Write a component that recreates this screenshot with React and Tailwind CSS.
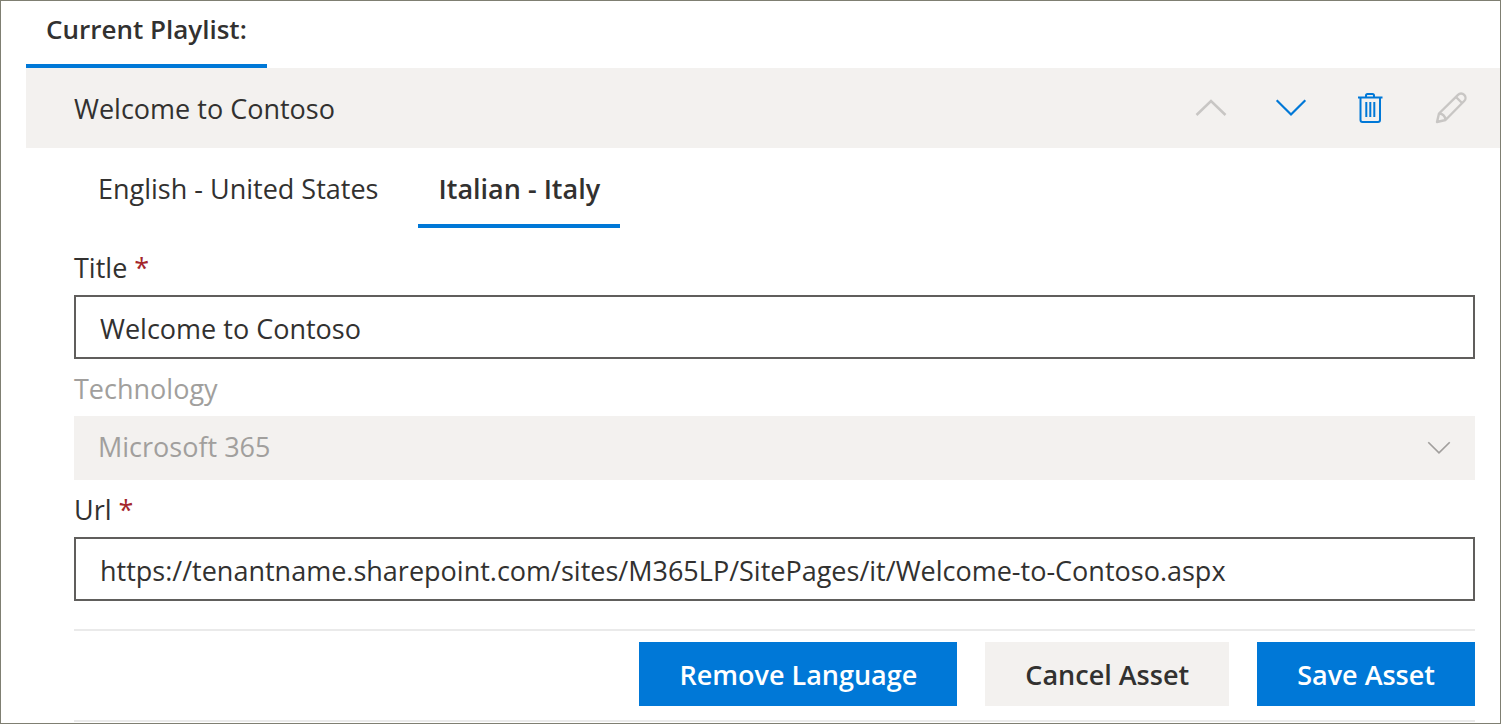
import { useState } from "react";

function ChevronUp({ className }) {
  return (
    <svg className={className} viewBox="0 0 32 32" fill="none" stroke="currentColor" strokeWidth="2.5" aria-hidden="true">
      <path d="M1.500 23 16 9l14.500 14" />
    </svg>
  );
}

function ChevronDown({ className }) {
  return (
    <svg className={className} viewBox="0 0 32 32" fill="none" stroke="currentColor" strokeWidth="2.2" aria-hidden="true">
      <path d="M1.700 8.300 16 22.500 30.300 8.300" />
    </svg>
  );
}

function Trash({ className }) {
  return (
    <svg className={className} viewBox="0 0 32 32" fill="none" stroke="currentColor" strokeWidth="2" aria-hidden="true">
      <path d="M3 5.500h24.500M11 5.500V3.500a1.500 1.500 0 0 1 1.500-1.500h5a1.500 1.500 0 0 1 1.500 1.500v2M5.500 5.500V28a2 2 0 0 0 2 2h15.500a2 2 0 0 0 2-2V5.500" />
      <path d="M11.300 10v15M15.300 10v15M19.300 10v15" />
    </svg>
  );
}

function Pencil({ className }) {
  return (
    <svg className={className} viewBox="0 0 32 32" fill="none" stroke="currentColor" strokeWidth="2.4" strokeLinejoin="round" aria-hidden="true">
      <path d="M2 30l2-8.500L23 2.800a4.200 4.200 0 0 1 6.200 6.200L10.500 28 2 30zM21 5l6 6M4.500 21.500c3 0.500 5.500 3 6 6" />
    </svg>
  );
}

const tabs = ["English - United States", "Italian - Italy"];
const labelClass = "block pt-3 pb-[9px] leading-9";
const inputClass = "block h-16 w-full border-2 border-[#605e5c] bg-white px-6 pt-0.5 outline-none";
const iconButton = "flex h-20 w-20 items-center justify-center";
const actionButton = "h-16 px-10 pt-0.5";

export default function App() {
  const [active, setActive] = useState(1);
  const [title, setTitle] = useState("Welcome to Contoso");
  const [url, setUrl] = useState("https://tenantname.sharepoint.com/sites/M365LP/SitePages/it/Welcome-to-Contoso.aspx");

  return (
    <main className="border border-[#7f7f72] bg-white pb-px pl-[25px] font-['Open_Sans','Noto_Sans',sans-serif] text-[27px] text-[#323130]">
      <div className="flex">
        <h1 className="border-b-4 border-[#0078d7] px-5 pt-2 pb-[15px] text-[26px] leading-10 font-semibold">Current Playlist:</h1>
      </div>

      <section className="flex h-20 items-center justify-between bg-[#f3f1ef] pl-12">
        <h2 className="pt-0.5">Welcome to Contoso</h2>
        <div className="flex pr-[9px]">
          <button type="button" disabled aria-label="Move up" className={`${iconButton} text-[#c8c6c4]`}>
            <ChevronUp className="size-8" />
          </button>
          <button type="button" aria-label="Move down" className={`${iconButton} text-[#0078d7]`}>
            <ChevronDown className="size-8" />
          </button>
          <button type="button" aria-label="Delete" className={`${iconButton} text-[#0078d7]`}>
            <Trash className="size-8" />
          </button>
          <button type="button" disabled aria-label="Edit" className={`${iconButton} text-[#c8c6c4]`}>
            <Pencil className="size-8" />
          </button>
        </div>
      </section>

      <div className="pr-[25px] pl-12">
        <div role="tablist" className="flex gap-5 pl-1">
          {tabs.map((name, i) => (
            <button
              key={name}
              type="button"
              role="tab"
              aria-selected={i === active}
              onClick={() => setActive(i)}
              className={`h-20 border-b-4 px-5 pt-1.5 ${i === active ? "border-[#0078d7] font-semibold" : "border-transparent"}`}
            >
              {name}
            </button>
          ))}
        </div>

        <form className="pt-[10px]" onSubmit={(e) => e.preventDefault()}>
          <label htmlFor="title" className={labelClass}>
            Title <span className="text-[#a4262c]">*</span>
          </label>
          <input id="title" className={inputClass} value={title} onChange={(e) => setTitle(e.target.value)} />

          <label htmlFor="technology" className={`${labelClass} text-[#a19f9d]`}>Technology</label>
          <div className="relative">
            <select id="technology" disabled className="block h-16 w-full appearance-none bg-[#f3f1ef] px-6 pb-0.5 text-[#a19f9d] opacity-100">
              <option>Microsoft 365</option>
            </select>
            <ChevronDown className="pointer-events-none absolute top-5 right-6 size-6 text-[#a19f9d]" />
          </div>

          <label htmlFor="url" className={labelClass}>
            Url <span className="text-[#a4262c]">*</span>
          </label>
          <input id="url" className={inputClass} value={url} onChange={(e) => setUrl(e.target.value)} />

          <div className="mt-7 flex justify-end gap-7 border-y-2 border-[#eaeaea] pt-[11px] pb-[14px] font-semibold">
            <button type="button" className={`${actionButton} bg-[#0078d7] text-white`}>Remove Language</button>
            <button type="button" className={`${actionButton} bg-[#f3f1ef]`}>Cancel Asset</button>
            <button type="submit" className={`${actionButton} bg-[#0078d7] text-white`}>Save Asset</button>
          </div>
        </form>
      </div>
    </main>
  );
}
